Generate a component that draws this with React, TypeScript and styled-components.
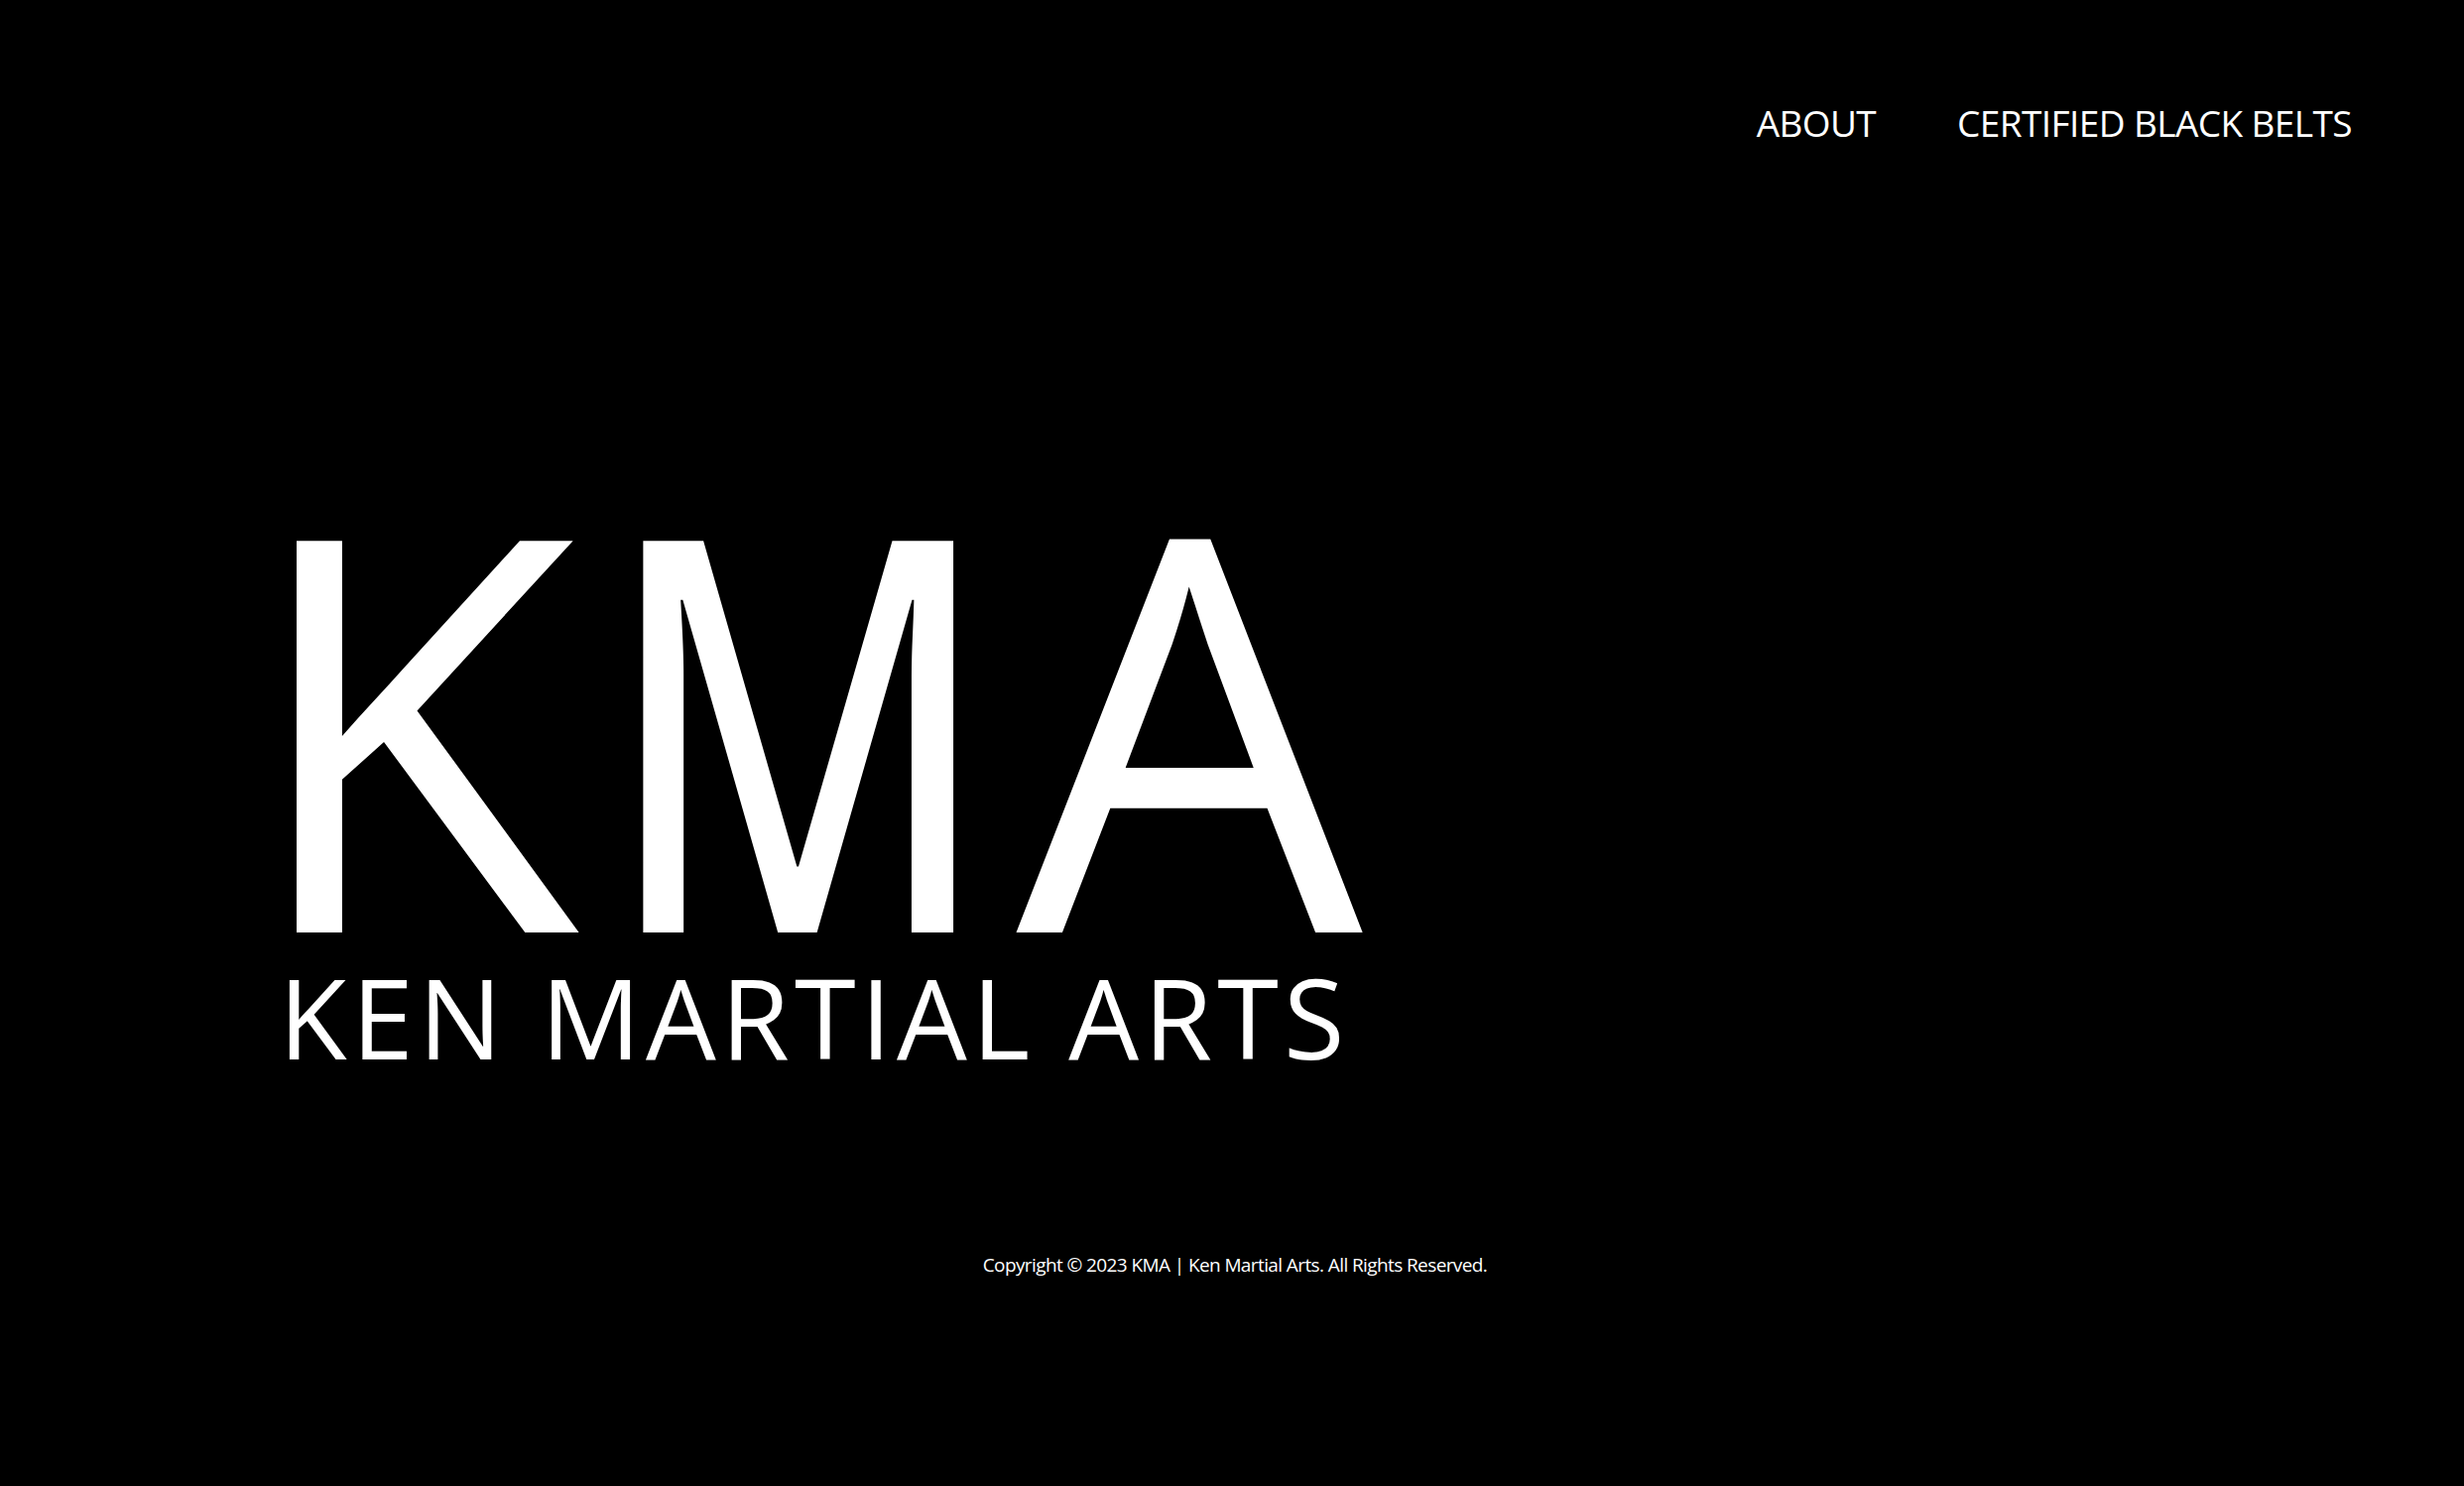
import React from "react";
import styled, { createGlobalStyle } from "styled-components";

const GlobalStyle = createGlobalStyle`
  html, body {
    margin: 0;
    padding: 0;
    background: #000;
    color: #fff;
    font-family: "Open Sans", "Noto Sans", sans-serif;
  }
  #root {
    min-height: 100vh;
    background: #000;
  }
`;

const Page = styled.div`
  min-height: 1498px;
  display: flex;
  flex-direction: column;
  background: #000;
`;

const Header = styled.header`
  display: flex;
  justify-content: flex-end;
  padding: 105px 113px 0 0;
`;

const Nav = styled.nav`
  display: flex;
  gap: 82px;
`;

const NavLink = styled.a`
  color: #fff;
  text-decoration: none;
  font-size: 37px;
  line-height: 1;
  letter-spacing: -0.6px;
  font-weight: 400;
`;

const Hero = styled.section`
  display: flex;
  flex-direction: column;
  margin-top: 363px;
  padding-left: 281px;
`;

const Logo = styled.h1`
  margin: 0 0 0 -36px;
  font-size: 553px;
  line-height: 0.8;
  font-weight: 400;
  letter-spacing: 24px;
`;

const NarrowLetter = styled.span`
  font-stretch: 87.5%;
`;

const Tagline = styled.h2`
  margin: 22px 0 0 0;
  font-size: 112px;
  line-height: 1;
  font-weight: 400;
  letter-spacing: 5px;
`;

const Footer = styled.footer`
  margin-top: 185px;
  padding-left: 6px;
  display: flex;
  justify-content: center;
`;

const Copy = styled.p`
  margin: 0;
  font-size: 19px;
  line-height: 1;
  letter-spacing: -0.6px;
`;

export default function App() {
  return (
    <>
      <GlobalStyle />
      <Page>
        <Header>
          <Nav>
            <NavLink href="#">ABOUT</NavLink>
            <NavLink href="#">CERTIFIED BLACK BELTS</NavLink>
          </Nav>
        </Header>
        <Hero>
          <Logo>
            K<NarrowLetter>M</NarrowLetter>A
          </Logo>
          <Tagline>KEN MARTIAL ARTS</Tagline>
        </Hero>
        <Footer>
          <Copy>Copyright © 2023 KMA | Ken Martial Arts. All Rights Reserved.</Copy>
        </Footer>
      </Page>
    </>
  );
}
